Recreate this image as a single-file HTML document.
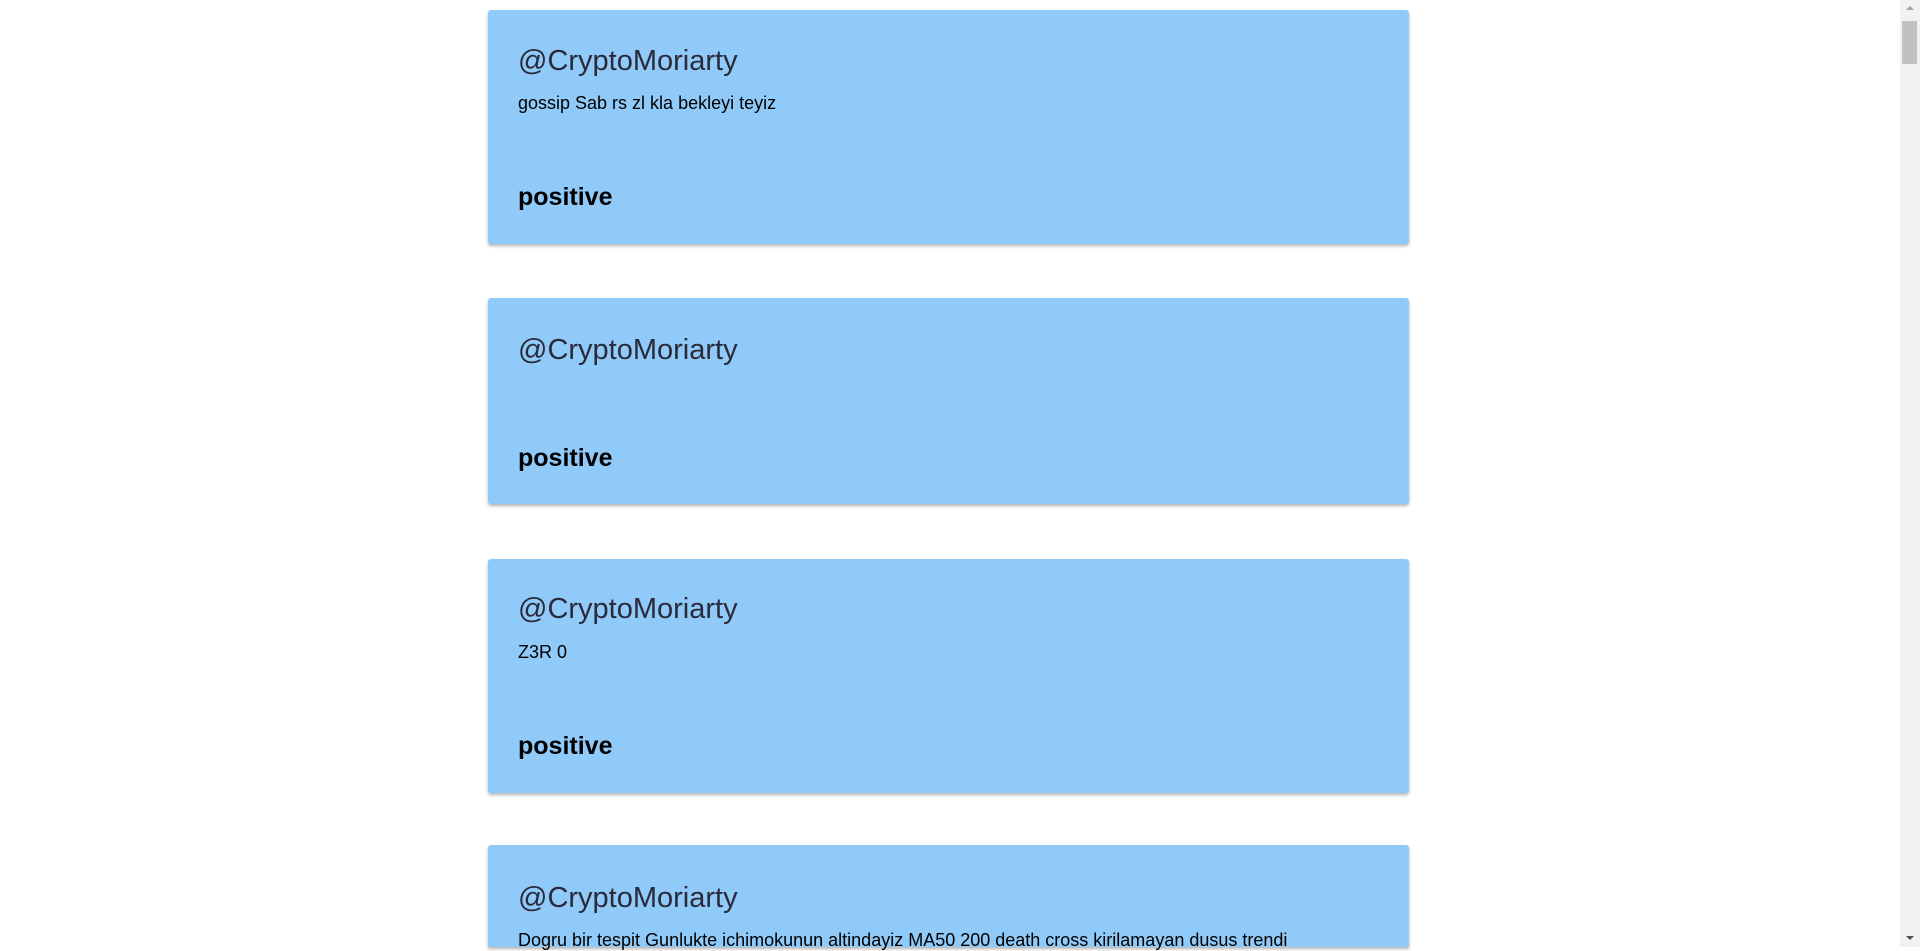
<!DOCTYPE html>
<html><head><meta charset="utf-8"><style>
html,body{margin:0;padding:0;background:#fff;width:1920px;height:947px;overflow:hidden;font-family:"Liberation Sans",sans-serif;}
.card{position:absolute;left:488px;width:921px;background:#90caf9;border-radius:3px;box-shadow:0 2px 3px rgba(0,0,0,.3);}
.u{position:absolute;left:30px;font-size:29px;color:#2a2a3a;font-weight:300;line-height:34px;white-space:nowrap;}
.b{position:absolute;left:30px;font-size:18px;color:#000;line-height:22px;white-space:nowrap;}
.p{position:absolute;left:30px;font-size:25px;font-weight:bold;color:#000;line-height:30px;}
.sb{position:absolute;right:0;top:0;width:20px;height:947px;background:#f1f1f1;}
.th{position:absolute;right:3px;top:21px;width:15px;height:43px;background:#c1c1c1;}
</style></head><body>
<div class="card" style="top:10px;height:234px">
 <div class="u" style="top:34px">@CryptoMoriarty</div>
 <div class="b" style="top:82px">gossip Sab rs zl kla bekleyi teyiz</div>
 <div class="p" style="top:172px">positive</div>
</div>
<div class="card" style="top:298px;height:206px">
 <div class="u" style="top:35px">@CryptoMoriarty</div>
 <div class="p" style="top:145px">positive</div>
</div>
<div class="card" style="top:559px;height:234px">
 <div class="u" style="top:33px">@CryptoMoriarty</div>
 <div class="b" style="top:82px">Z3R 0</div>
 <div class="p" style="top:172px">positive</div>
</div>
<div class="card" style="top:845px;height:102px;border-radius:3px 3px 0 0">
 <div class="u" style="top:36px">@CryptoMoriarty</div>
 <div class="b" style="top:84px">Dogru bir tespit Gunlukte ichimokunun altindayiz MA50 200 death cross kirilamayan dusus trendi</div>
</div>
<div class="sb"><div class="th"></div>
<div style="position:absolute;left:6px;top:6px;width:0;height:0;border-left:4px solid transparent;border-right:4px solid transparent;border-bottom:4px solid #a3a3a3"></div>
<div style="position:absolute;left:6px;top:936px;width:0;height:0;border-left:4px solid transparent;border-right:4px solid transparent;border-top:4px solid #505050"></div>
</div>
</body></html>
